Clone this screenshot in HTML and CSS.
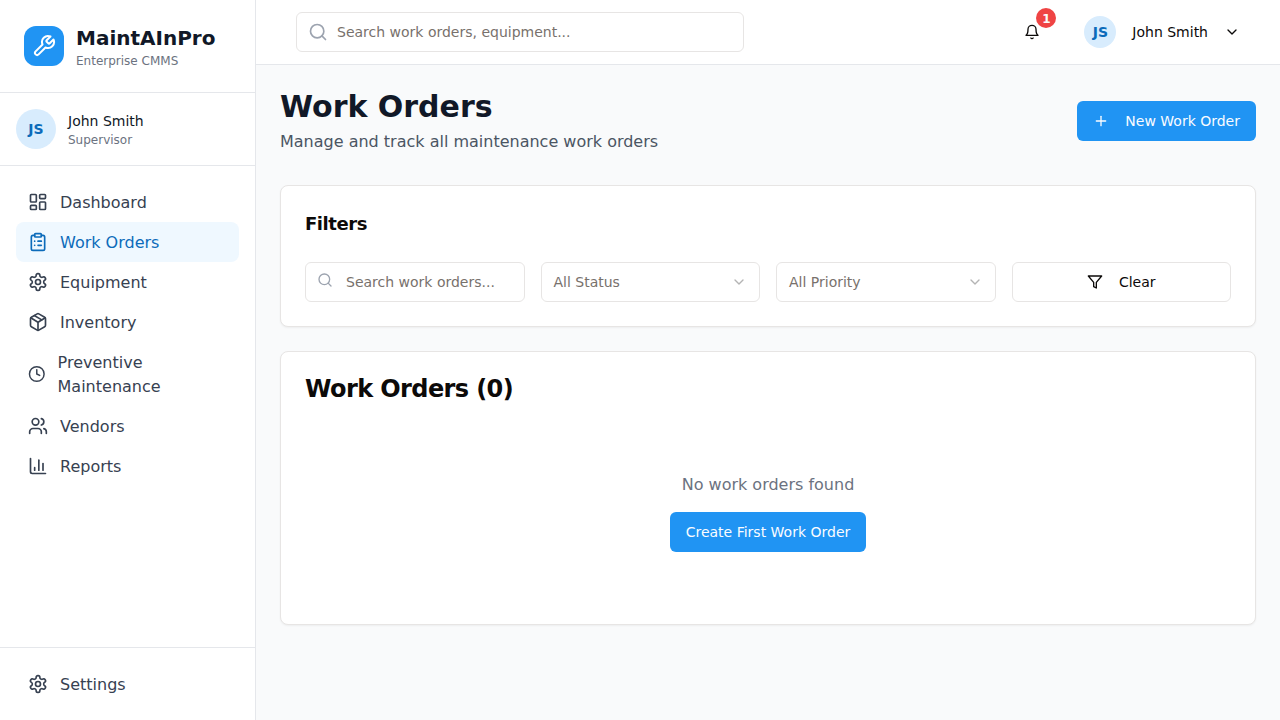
FILE: index.html
```html
<!DOCTYPE html>
<html lang="en">
<head>
<meta charset="utf-8">
<title>MaintAInPro - Work Orders</title>
<link rel="stylesheet" href="styles.css">
</head>
<body>
<div class="app">
  <aside class="sidebar">
    <div class="brand">
      <div class="brand-mark">
        <svg class="icon icon-lg" viewBox="0 0 24 24"><path d="M14.7 6.3a1 1 0 0 0 0 1.4l1.6 1.6a1 1 0 0 0 1.4 0l3.77-3.77a6 6 0 0 1-7.94 7.94l-6.91 6.91a2.12 2.12 0 0 1-3-3l6.91-6.91a6 6 0 0 1 7.94-7.94l-3.76 3.76z"/></svg>
      </div>
      <div>
        <div class="brand-name">MaintAInPro</div>
        <div class="caption">Enterprise CMMS</div>
      </div>
    </div>
    <div class="profile">
      <div class="avatar avatar-lg">JS</div>
      <div>
        <div class="profile-name">John Smith</div>
        <div class="caption">Supervisor</div>
      </div>
    </div>
    <nav class="nav">
      <a class="nav-item">
        <svg class="icon icon-md" viewBox="0 0 24 24"><rect width="7" height="9" x="3" y="3" rx="1"/><rect width="7" height="5" x="14" y="3" rx="1"/><rect width="7" height="9" x="14" y="12" rx="1"/><rect width="7" height="5" x="3" y="16" rx="1"/></svg>
        <span>Dashboard</span>
      </a>
      <a class="nav-item active">
        <svg class="icon icon-md" viewBox="0 0 24 24"><rect width="8" height="4" x="8" y="2" rx="1" ry="1"/><path d="M16 4h2a2 2 0 0 1 2 2v14a2 2 0 0 1-2 2H6a2 2 0 0 1-2-2V6a2 2 0 0 1 2-2h2"/><path d="M12 11h4"/><path d="M12 16h4"/><path d="M8 11h.01"/><path d="M8 16h.01"/></svg>
        <span>Work Orders</span>
      </a>
      <a class="nav-item">
        <svg class="icon icon-md" viewBox="0 0 24 24"><path d="M12.22 2h-.44a2 2 0 0 0-2 2v.18a2 2 0 0 1-1 1.73l-.43.25a2 2 0 0 1-2 0l-.15-.08a2 2 0 0 0-2.73.73l-.22.38a2 2 0 0 0 .73 2.73l.15.1a2 2 0 0 1 1 1.72v.51a2 2 0 0 1-1 1.74l-.15.09a2 2 0 0 0-.73 2.73l.22.38a2 2 0 0 0 2.73.73l.15-.08a2 2 0 0 1 2 0l.43.25a2 2 0 0 1 1 1.73V20a2 2 0 0 0 2 2h.44a2 2 0 0 0 2-2v-.18a2 2 0 0 1 1-1.73l.43-.25a2 2 0 0 1 2 0l.15.08a2 2 0 0 0 2.73-.73l.22-.39a2 2 0 0 0-.73-2.73l-.15-.08a2 2 0 0 1-1-1.74v-.5a2 2 0 0 1 1-1.74l.15-.09a2 2 0 0 0 .73-2.73l-.22-.38a2 2 0 0 0-2.73-.73l-.15.08a2 2 0 0 1-2 0l-.43-.25a2 2 0 0 1-1-1.73V4a2 2 0 0 0-2-2z"/><circle cx="12" cy="12" r="3"/></svg>
        <span>Equipment</span>
      </a>
      <a class="nav-item">
        <svg class="icon icon-md" viewBox="0 0 24 24"><path d="M11 21.73a2 2 0 0 0 2 0l7-4A2 2 0 0 0 21 16V8a2 2 0 0 0-1-1.73l-7-4a2 2 0 0 0-2 0l-7 4A2 2 0 0 0 3 8v8a2 2 0 0 0 1 1.73z"/><path d="M12 22V12"/><path d="m3.3 7 7.703 4.734a2 2 0 0 0 1.994 0L20.7 7"/><path d="m7.5 4.27 9 5.15"/></svg>
        <span>Inventory</span>
      </a>
      <a class="nav-item">
        <svg class="icon icon-md" viewBox="0 0 24 24"><circle cx="12" cy="12" r="10"/><polyline points="12 6 12 12 16 14"/></svg>
        <span>Preventive Maintenance</span>
      </a>
      <a class="nav-item">
        <svg class="icon icon-md" viewBox="0 0 24 24"><path d="M16 21v-2a4 4 0 0 0-4-4H6a4 4 0 0 0-4 4v2"/><circle cx="9" cy="7" r="4"/><path d="M22 21v-2a4 4 0 0 0-3-3.87"/><path d="M16 3.13a4 4 0 0 1 0 7.75"/></svg>
        <span>Vendors</span>
      </a>
      <a class="nav-item">
        <svg class="icon icon-md" viewBox="0 0 24 24"><path d="M3 3v16a2 2 0 0 0 2 2h16"/><path d="M18 17V9"/><path d="M13 17V5"/><path d="M8 17v-3"/></svg>
        <span>Reports</span>
      </a>
    </nav>
    <div class="sidebar-foot">
      <a class="nav-item">
        <svg class="icon icon-md" viewBox="0 0 24 24"><path d="M12.22 2h-.44a2 2 0 0 0-2 2v.18a2 2 0 0 1-1 1.73l-.43.25a2 2 0 0 1-2 0l-.15-.08a2 2 0 0 0-2.73.73l-.22.38a2 2 0 0 0 .73 2.73l.15.1a2 2 0 0 1 1 1.72v.51a2 2 0 0 1-1 1.74l-.15.09a2 2 0 0 0-.73 2.73l.22.38a2 2 0 0 0 2.73.73l.15-.08a2 2 0 0 1 2 0l.43.25a2 2 0 0 1 1 1.73V20a2 2 0 0 0 2 2h.44a2 2 0 0 0 2-2v-.18a2 2 0 0 1 1-1.73l.43-.25a2 2 0 0 1 2 0l.15.08a2 2 0 0 0 2.73-.73l.22-.39a2 2 0 0 0-.73-2.73l-.15-.08a2 2 0 0 1-1-1.74v-.5a2 2 0 0 1 1-1.74l.15-.09a2 2 0 0 0 .73-2.73l-.22-.38a2 2 0 0 0-2.73-.73l-.15.08a2 2 0 0 1-2 0l-.43-.25a2 2 0 0 1-1-1.73V4a2 2 0 0 0-2-2z"/><circle cx="12" cy="12" r="3"/></svg>
        <span>Settings</span>
      </a>
    </div>
  </aside>

  <div class="content">
    <header class="topbar">
      <div class="search search-global">
        <svg class="icon icon-md search-icon" viewBox="0 0 24 24"><circle cx="11" cy="11" r="8"/><path d="m21 21-4.3-4.3"/></svg>
        <input class="input" type="text" placeholder="Search work orders, equipment...">
      </div>
      <div class="topbar-actions">
        <button class="bell">
          <svg class="icon icon-sm" viewBox="0 0 24 24"><path d="M6 8a6 6 0 0 1 12 0c0 7 3 9 3 9H3s3-2 3-9"/><path d="M10.3 21a1.94 1.94 0 0 0 3.4 0"/></svg>
          <span class="badge">1</span>
        </button>
        <button class="user-menu">
          <span class="avatar avatar-sm">JS</span>
          <span>John Smith</span>
          <svg class="icon icon-sm" viewBox="0 0 24 24"><path d="m6 9 6 6 6-6"/></svg>
        </button>
      </div>
    </header>

    <main class="main">
      <div class="page-head">
        <div>
          <h1 class="page-title">Work Orders</h1>
          <p class="page-subtitle">Manage and track all maintenance work orders</p>
        </div>
        <button class="btn btn-primary">
          <svg class="icon icon-sm" viewBox="0 0 24 24"><path d="M5 12h14"/><path d="M12 5v14"/></svg>
          New Work Order
        </button>
      </div>

      <section class="card">
        <h2 class="filters-title">Filters</h2>
        <div class="filters">
          <div class="search">
            <svg class="icon icon-sm search-icon" viewBox="0 0 24 24"><circle cx="11" cy="11" r="8"/><path d="m21 21-4.3-4.3"/></svg>
            <input class="input" type="text" placeholder="Search work orders...">
          </div>
          <button class="select">
            <span>All Status</span>
            <svg class="icon icon-sm" viewBox="0 0 24 24"><path d="m6 9 6 6 6-6"/></svg>
          </button>
          <button class="select">
            <span>All Priority</span>
            <svg class="icon icon-sm" viewBox="0 0 24 24"><path d="m6 9 6 6 6-6"/></svg>
          </button>
          <button class="btn btn-outline">
            <svg class="icon icon-sm" viewBox="0 0 24 24"><polygon points="22 3 2 3 10 12.46 10 19 14 21 14 12.46 22 3"/></svg>
            Clear
          </button>
        </div>
      </section>

      <section class="card">
        <h2 class="list-title">Work Orders (0)</h2>
        <div class="empty">
          <p class="empty-text">No work orders found</p>
          <button class="btn btn-primary">Create First Work Order</button>
        </div>
      </section>
    </main>
  </div>
</div>
</body>
</html>
```
FILE: styles.css
```css
*, *::before, *::after { box-sizing: border-box; }

body, h1, h2, p { margin: 0; }

body {
  font-family: "DejaVu Sans", sans-serif;
  font-size: 16px;
  line-height: 24px;
  color: #0c0a09;
  background: #f9fafb;
}

button, input {
  font: inherit;
  color: inherit;
  margin: 0;
}

button {
  border: 0;
  background: none;
  padding: 0;
}

.icon {
  display: block;
  min-width: 0;
  fill: none;
  stroke: currentColor;
  stroke-width: 2;
  stroke-linecap: round;
  stroke-linejoin: round;
}
.icon-sm { width: 16px; height: 16px; }
.icon-md { width: 20px; height: 20px; }
.icon-lg { width: 24px; height: 24px; }

.app {
  display: flex;
  height: 100vh;
  overflow: hidden;
}

/* Sidebar */
.sidebar {
  display: flex;
  flex-direction: column;
  flex: 0 0 256px;
  background: #fff;
  border-right: 1px solid #e5e7eb;
}

.brand {
  display: flex;
  align-items: center;
  gap: 12px;
  padding: 24px;
  border-bottom: 1px solid #e5e7eb;
}
.brand-mark {
  display: flex;
  align-items: center;
  justify-content: center;
  width: 40px;
  height: 40px;
  border-radius: 12px;
  background: #2094f3;
  color: #fff;
}
.brand-name {
  font-size: 20px;
  line-height: 28px;
  font-weight: 700;
  color: #111827;
}
.caption {
  padding-top: 1px;
  margin-bottom: -1px;
  font-size: 12px;
  line-height: 16px;
  color: #6b7280;
}

.profile {
  display: flex;
  align-items: center;
  gap: 12px;
  padding: 16px;
  border-bottom: 1px solid #e5e7eb;
}
.profile-name {
  font-size: 14px;
  line-height: 20px;
  color: #111827;
}

.avatar {
  display: flex;
  align-items: center;
  justify-content: center;
  border-radius: 50%;
  background: #d8ecfd;
  color: #0c6bba;
  font-size: 14px;
  line-height: 20px;
  font-weight: 700;
}
.avatar-lg { width: 40px; height: 40px; }
.avatar-sm { width: 32px; height: 32px; }

.nav {
  flex: 1;
  padding: 16px;
}
.nav-item {
  display: flex;
  align-items: center;
  gap: 12px;
  padding: 8px 12px;
  border-radius: 8px;
  color: #374151;
}
.nav-item span {
  padding-top: 1px;
  margin-bottom: -1px;
}
.nav-item.active {
  background: #eff8ff;
  color: #0c6bba;
}
.sidebar-foot {
  padding: 16px;
  border-top: 1px solid #e5e7eb;
}

/* Top bar */
.content {
  display: flex;
  flex-direction: column;
  flex: 1;
  min-width: 0;
}
.topbar {
  display: flex;
  align-items: center;
  justify-content: space-between;
  height: 65px;
  padding: 0 24px 0 40px;
  background: #fff;
  border-bottom: 1px solid #e5e7eb;
}
.topbar-actions {
  display: flex;
  align-items: center;
  gap: 16px;
}

.search { position: relative; }
.search-global { width: 448px; }
.search-icon {
  position: absolute;
  left: 12px;
  top: 10px;
  color: #9ca3af;
}
.input {
  display: block;
  width: 100%;
  height: 40px;
  padding: 8px 12px 8px 40px;
  border: 1px solid #e7e5e4;
  border-radius: 6px;
  background: #fff;
  font-size: 14px;
  line-height: 20px;
}
.input::placeholder {
  color: #78716c;
  opacity: 1;
}

.bell {
  position: relative;
  display: flex;
  align-items: center;
  justify-content: center;
  width: 40px;
  height: 40px;
}
.badge {
  position: absolute;
  top: -4px;
  right: -4px;
  display: flex;
  align-items: center;
  justify-content: center;
  width: 20px;
  height: 20px;
  padding-top: 2px;
  border-radius: 50%;
  background: #ef4444;
  color: #fafaf9;
  font-size: 12px;
  line-height: 16px;
  font-weight: 700;
}
.user-menu {
  display: flex;
  align-items: center;
  gap: 16px;
  height: 40px;
  padding: 0 16px;
  font-size: 14px;
  line-height: 20px;
}

/* Page */
.main {
  display: flex;
  flex-direction: column;
  gap: 24px;
  padding: 24px;
}
.page-head {
  display: flex;
  align-items: center;
  justify-content: space-between;
  margin-bottom: 8px;
}
.page-title {
  font-size: 30px;
  line-height: 36px;
  font-weight: 700;
  color: #111827;
}
.page-subtitle {
  margin-top: 5px;
  margin-bottom: -1px;
  color: #4b5563;
}

.btn {
  display: inline-flex;
  align-items: center;
  justify-content: center;
  gap: 16px;
  height: 40px;
  padding: 0 16px;
  border-radius: 6px;
  font-size: 14px;
  line-height: 20px;
  white-space: nowrap;
}
.btn-primary {
  background: #2094f3;
  color: #fafcff;
}
.btn-outline {
  border: 1px solid #e7e5e4;
  background: #fff;
}

.card {
  padding: 24px;
  border: 1px solid #e7e5e4;
  border-radius: 8px;
  background: #fff;
  box-shadow: 0 1px 2px rgba(0, 0, 0, 0.05);
}
.filters-title {
  margin-bottom: 24px;
  font-size: 18px;
  line-height: 28px;
  font-weight: 700;
  letter-spacing: -0.025em;
}
.filters {
  display: grid;
  grid-template-columns: repeat(4, 1fr);
  gap: 16px;
}
.select {
  display: flex;
  align-items: center;
  justify-content: space-between;
  height: 40px;
  padding: 0 12px;
  border: 1px solid #e7e5e4;
  border-radius: 6px;
  background: #fff;
  font-size: 14px;
  line-height: 20px;
  color: #78716c;
}
.select .icon {
  color: #0c0a09;
  opacity: 0.3;
}

.list-title {
  padding-top: 1px;
  margin-bottom: 23px;
  font-size: 24px;
  line-height: 24px;
  font-weight: 700;
  letter-spacing: -0.025em;
}
.empty {
  display: flex;
  flex-direction: column;
  align-items: center;
  gap: 16px;
  padding: 48px 0;
}
.empty-text {
  padding-top: 1px;
  margin-bottom: -1px;
  color: #6b7280;
}
```
